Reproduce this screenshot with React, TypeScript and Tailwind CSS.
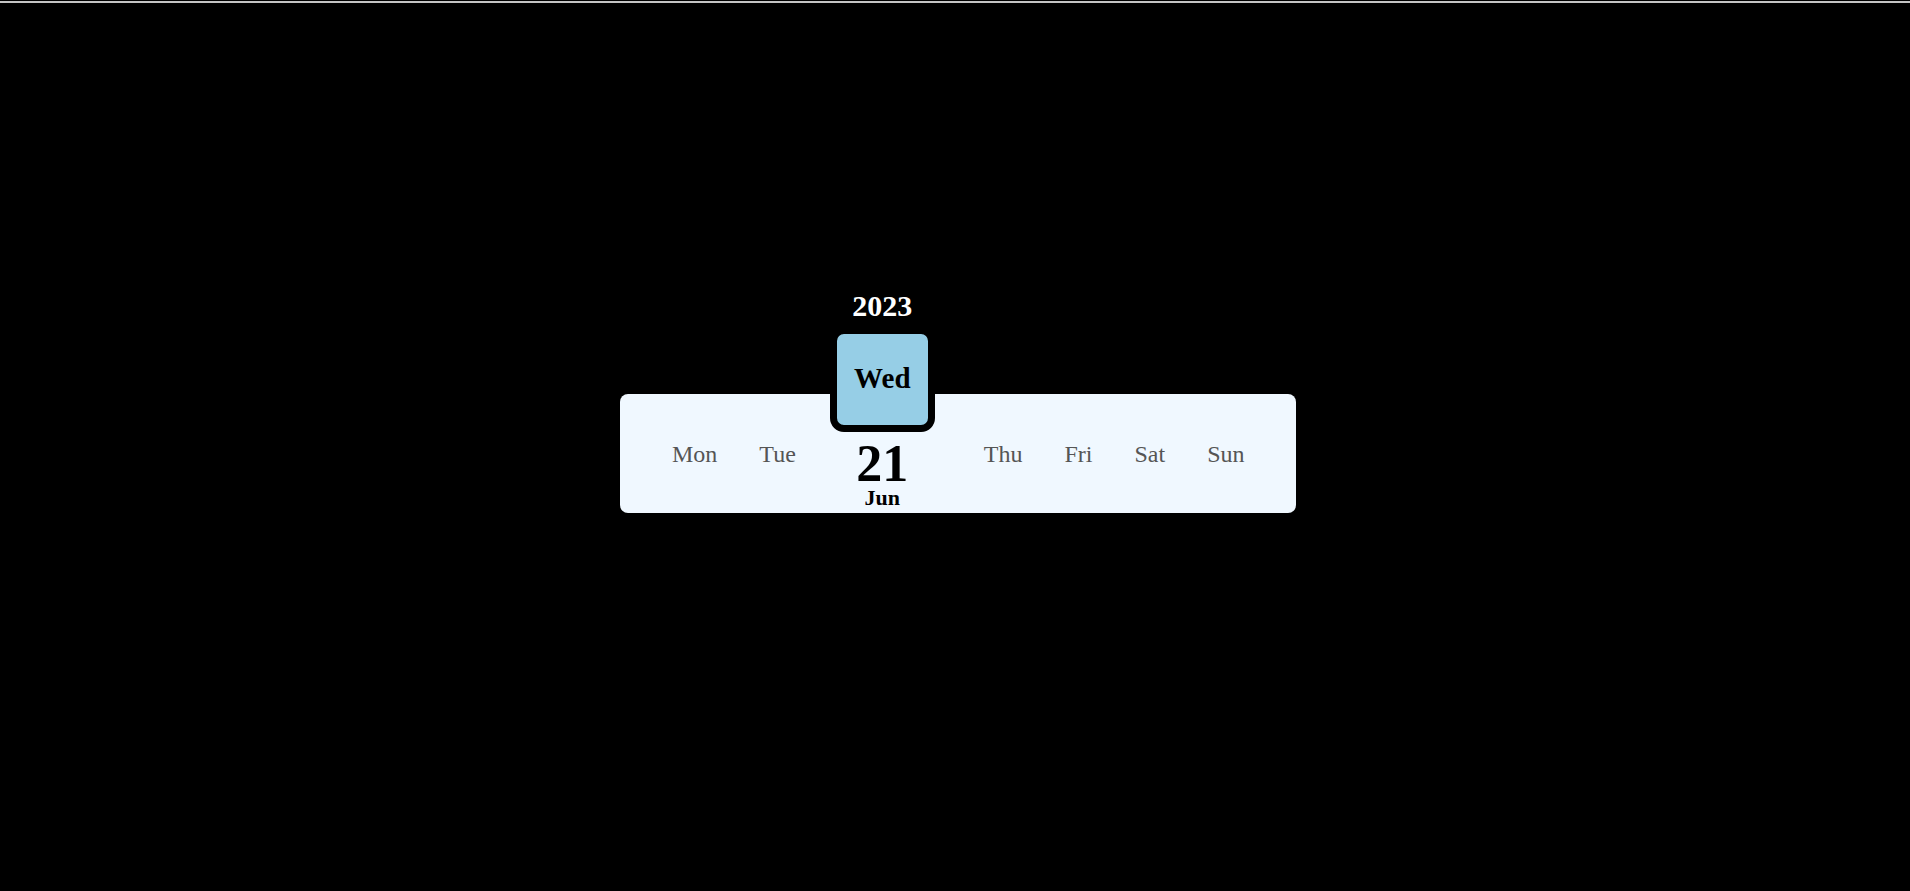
const before = ["Mon", "Tue"];
const after = ["Thu", "Fri", "Sat", "Sun"];

function DayName({ label }: { label: string }) {
  return <span className="text-[24px] leading-none text-[#555555]">{label}</span>;
}

export default function App() {
  return (
    <div className="min-h-screen bg-black font-['Liberation_Serif','Times_New_Roman',serif]">
      <div className="h-[1px] bg-black" />
      <div className="h-[2px] bg-[#c4c4c4]" />
      <div className="flex justify-center pl-[6px] pt-[391px]">
        <div className="flex h-[119px] w-[676px] items-center gap-[42px] rounded-lg bg-[#f0f8ff] pl-[52px] pt-[1px]">
          {before.map((d) => (
            <DayName key={d} label={d} />
          ))}
          <div className="-ml-[8px] mr-[7px] -mt-[104px] flex flex-col items-center self-start">
            <span className="text-[30px] font-bold leading-none text-white">2023</span>
            <div className="mt-[6px] flex h-[105px] w-[105px] items-center justify-center rounded-[14px] border-[7px] border-black bg-[#96cee6] pb-[2px]">
              <span className="text-[29px] font-bold leading-none text-black">Wed</span>
            </div>
            <span className="mt-[6px] text-[52px] font-bold leading-none text-black">21</span>
            <span className="-mt-[3px] text-[22px] font-bold leading-none text-black">Jun</span>
          </div>
          {after.map((d) => (
            <DayName key={d} label={d} />
          ))}
        </div>
      </div>
    </div>
  );
}
